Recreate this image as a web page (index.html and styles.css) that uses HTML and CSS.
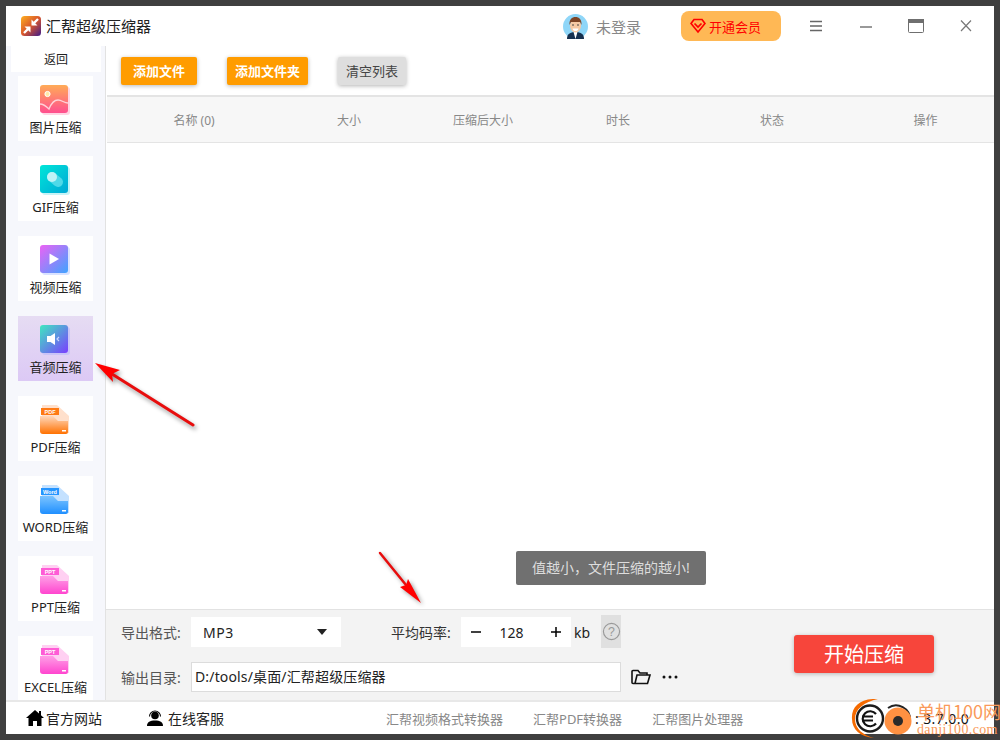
FILE: index.html
```html
<!DOCTYPE html>
<html lang="zh-CN">
<head>
<meta charset="utf-8">
<title>汇帮超级压缩器</title>
<link rel="stylesheet" href="styles.css">
</head>
<body>
<div class="app">
  <header class="titlebar">
    <div class="brand">
      <svg class="logo" viewBox="0 0 20 20">
        <defs><linearGradient id="lg" x1="0" y1="0" x2="1" y2="1"><stop offset="0" stop-color="#ffb01f"/><stop offset=".5" stop-color="#d8562c"/><stop offset="1" stop-color="#3c1a8c"/></linearGradient></defs>
        <rect width="20" height="20" rx="3.5" fill="url(#lg)"/>
        <path d="M17 3 11.500 8.500M3 17 8.500 11.500" stroke="#fff" stroke-width="2.400" fill="none"/>
        <path d="M10.500 3.500V9.500H16.500zM3.500 10.500H9.500V16.500z" fill="#fff"/>
      </svg>
      <span class="brand-name">汇帮超级压缩器</span>
    </div>
    <div class="user">
      <svg class="avatar" viewBox="0 0 25 25">
        <circle cx="12.500" cy="12.500" r="12.500" fill="#8fd6f8"/>
        <path d="M4 25c0-5 3-7 8.500-7S21 20 21 25z" fill="#16304f"/>
        <path d="M10.500 18h4l-2 7z" fill="#fff"/>
        <ellipse cx="12.500" cy="12" rx="5.500" ry="6.500" fill="#f6c9a4"/>
        <path d="M6.500 11C6 5.500 9 3 12.500 3S19 5.500 18.500 11L17 8H8z" fill="#7d4426"/>
        <path d="M9.500 14.500h6c-.5 2-1.500 2.500-3 2.500s-2.500-.5-3-2.500z" fill="#fff"/>
        <circle cx="10" cy="11" r=".8" fill="#333"/><circle cx="15" cy="11" r=".8" fill="#333"/>
      </svg>
      <span class="user-name">未登录</span>
    </div>
    <div class="vip">
      <svg class="vip-icon" viewBox="0 0 16 16"><path d="M4 1.500h8l3 4L8 14 1 5.500zM4.500 5.500 8 9l3.500-3.500" fill="none" stroke="#f00" stroke-width="1.700"/></svg>
      <span>开通会员</span>
    </div>
    <div class="win-controls">
      <svg class="ctl" viewBox="0 0 14 12"><path d="M1 1.500h12M1 6h12M1 10.500h12" stroke="#666" stroke-width="1.700"/></svg>
      <svg class="ctl" viewBox="0 0 14 12"><path d="M1 7h12" stroke="#777" stroke-width="1.500"/></svg>
      <svg class="ctl ctl-max" viewBox="0 0 16 14"><rect x=".5" y=".5" width="15" height="13" rx="1" fill="#fff" stroke="#6f6f6f"/><rect x="0" y="0" width="16" height="4" fill="#6f6f6f"/></svg>
      <svg class="ctl" viewBox="0 0 14 12"><path d="M2 .5l10 10.500M12 .5 2 11" stroke="#777" stroke-width="1.200"/></svg>
    </div>
  </header>

  <div class="body">
    <nav class="sidebar">
      <div class="back">返回</div>
      <div class="nav-list">
        <div class="nav-item">
          <svg class="nav-icon" viewBox="0 0 32 32">
            <defs><linearGradient id="g1" x1="0" y1="0" x2="0" y2="1"><stop offset="0" stop-color="#ffab57"/><stop offset="1" stop-color="#ff4f8f"/></linearGradient></defs>
            <rect x="2" y="2" width="28" height="28" rx="3" fill="#ffd5e3"/><rect width="28" height="28" rx="3" fill="url(#g1)"/>
            <circle cx="7.500" cy="9" r="2.600" fill="#ffe9a8" stroke="#fff" stroke-width="1"/>
            <path d="M0 19c4 0 6 2 9 5 2-5 5-9 9-9s6 3 10 3" fill="none" stroke="#ffd3d8" stroke-width="1.300"/>
          </svg>
          <span>图片压缩</span>
        </div>
        <div class="nav-item">
          <svg class="nav-icon" viewBox="0 0 32 32">
            <defs><linearGradient id="g2" x1="0" y1="0" x2="1" y2="1"><stop offset="0" stop-color="#00e6d8"/><stop offset="1" stop-color="#00a8d6"/></linearGradient></defs>
            <rect x="2" y="2" width="28" height="28" rx="3" fill="#c6f3f6"/><rect width="28" height="28" rx="3" fill="url(#g2)"/>
            <path d="M12 12 18 17" stroke="#4fd9e8" stroke-width="10" stroke-linecap="round"/>
            <circle cx="12" cy="12" r="5" fill="#bff3f6"/>
          </svg>
          <span>GIF压缩</span>
        </div>
        <div class="nav-item">
          <svg class="nav-icon" viewBox="0 0 32 32">
            <defs><linearGradient id="g3" x1="0" y1="0" x2="1" y2="1"><stop offset="0" stop-color="#ec62f5"/><stop offset="1" stop-color="#3fa4ff"/></linearGradient></defs>
            <rect x="2" y="2" width="28" height="28" rx="3" fill="#d9e2ff"/><rect width="28" height="28" rx="3" fill="url(#g3)"/>
            <path d="M9.500 8.500 19 14l-9.500 5.500z" fill="#fff"/>
          </svg>
          <span>视频压缩</span>
        </div>
        <div class="nav-item is-active">
          <svg class="nav-icon" viewBox="0 0 32 32">
            <defs><linearGradient id="g4" x1="0" y1="0" x2="1" y2="1"><stop offset="0" stop-color="#3fe8c0"/><stop offset="1" stop-color="#7a3dff"/></linearGradient></defs>
            <rect x="2" y="2" width="28" height="28" rx="3" fill="#c9c3f7"/><rect width="28" height="28" rx="3" fill="url(#g4)"/>
            <path d="M7 11h3.500L15 8v12l-4.500-3H7z" fill="#fff"/>
            <path d="M19 12l-2 2 2 2" fill="none" stroke="#c9d6ff" stroke-width="1.200"/>
          </svg>
          <span>音频压缩</span>
        </div>
        <div class="nav-item">
          <svg class="nav-icon" viewBox="0 0 32 32">
            <defs><linearGradient id="g5" x1="0" y1="0" x2="0" y2="1"><stop offset="0" stop-color="#ffd8bc"/><stop offset="1" stop-color="#ff7100"/></linearGradient></defs>
            <path d="M2 0h15l12 11v17H2z" fill="#ffe0cc"/>
            <path d="M0 11h13l5 5h10v11a2 2 0 0 1-2 2H3a3 3 0 0 1-3-3z" fill="url(#g5)"/>
            <rect x="1" y="3" width="18" height="7" fill="#ff7a14"/>
            <text class="mini" x="10" y="8.800">PDF</text>
            <rect x="22" y="25" width="4" height="1.500" fill="#fff"/>
          </svg>
          <span>PDF压缩</span>
        </div>
        <div class="nav-item">
          <svg class="nav-icon" viewBox="0 0 32 32">
            <defs><linearGradient id="g6" x1="0" y1="0" x2="0" y2="1"><stop offset="0" stop-color="#7cc4ff"/><stop offset="1" stop-color="#1f8fff"/></linearGradient></defs>
            <path d="M2 0h15l12 11v17H2z" fill="#c4e1ff"/>
            <path d="M0 11h13l5 5h10v11a2 2 0 0 1-2 2H3a3 3 0 0 1-3-3z" fill="url(#g6)"/>
            <rect x="1" y="3" width="18" height="7" fill="#2595ff"/>
            <text class="mini" x="10" y="8.800">Word</text>
            <rect x="22" y="25" width="4" height="1.500" fill="#fff"/>
          </svg>
          <span>WORD压缩</span>
        </div>
        <div class="nav-item">
          <svg class="nav-icon" viewBox="0 0 32 32">
            <defs><linearGradient id="g7" x1="0" y1="0" x2="0" y2="1"><stop offset="0" stop-color="#ff9fe6"/><stop offset="1" stop-color="#ff45cf"/></linearGradient></defs>
            <path d="M2 0h15l12 11v17H2z" fill="#ffd0f2"/>
            <path d="M0 11h13l5 5h10v11a2 2 0 0 1-2 2H3a3 3 0 0 1-3-3z" fill="url(#g7)"/>
            <rect x="1" y="3" width="18" height="7" fill="#ff5cd6"/>
            <text class="mini" x="10" y="8.800">PPT</text>
            <rect x="22" y="25" width="4" height="1.500" fill="#fff"/>
          </svg>
          <span>PPT压缩</span>
        </div>
        <div class="nav-item">
          <svg class="nav-icon" viewBox="0 0 32 32">
            <path d="M2 0h15l12 11v17H2z" fill="#ffd0f2"/>
            <path d="M0 11h13l5 5h10v11a2 2 0 0 1-2 2H3a3 3 0 0 1-3-3z" fill="url(#g7)"/>
            <rect x="1" y="3" width="18" height="7" fill="#ff5cd6"/>
            <text class="mini" x="10" y="8.800">PPT</text>
            <rect x="22" y="25" width="4" height="1.500" fill="#fff"/>
          </svg>
          <span>EXCEL压缩</span>
        </div>
      </div>
    </nav>

    <main class="main">
      <div class="toolbar">
        <button class="btn btn-orange btn-file">添加文件</button>
        <button class="btn btn-orange btn-folder">添加文件夹</button>
        <button class="btn btn-grey">清空列表</button>
      </div>
      <div class="thead">
        <span>名称 (0)</span><span>大小</span><span>压缩后大小</span><span>时长</span><span>状态</span><span>操作</span>
      </div>
      <div class="list"><div class="toast">值越小，文件压缩的越小!</div></div>
      <div class="panel">
        <div class="panel-fields">
          <div class="row">
            <label class="lbl">导出格式:</label>
            <div class="select"><span>MP3</span><i class="caret"></i></div>
            <label class="lbl lbl-rate">平均码率:</label>
            <div class="stepper">
              <svg viewBox="0 0 12 12" class="step-icon"><path d="M1 6h10" stroke="#000" stroke-width="1.500"/></svg>
              <span class="step-value">128</span>
              <svg viewBox="0 0 12 12" class="step-icon"><path d="M1 6h10M6 1v10" stroke="#000" stroke-width="1.500"/></svg>
            </div>
            <span class="unit">kb</span>
            <div class="help"><svg viewBox="0 0 20 20" class="help-icon"><circle cx="10" cy="10" r="8.500" fill="none" stroke="#999" stroke-width="1.200"/><text x="10" y="14.500" class="q">?</text></svg></div>
          </div>
          <div class="row">
            <label class="lbl">输出目录:</label>
            <div class="path">D:/tools/桌面/汇帮超级压缩器</div>
            <svg class="folder" viewBox="0 0 20 16"><path d="M4 14.500 6 6h13l-2.500 8.500H2A1 1 0 0 1 1 13.500V2.500A1 1 0 0 1 2 1.500h5l2 2.500h7v2" fill="none" stroke="#111" stroke-width="1.600"/></svg>
            <svg class="dots" viewBox="0 0 16 4"><circle cx="2" cy="2" r="1.500"/><circle cx="8" cy="2" r="1.500"/><circle cx="14" cy="2" r="1.500"/></svg>
          </div>
        </div>
        <button class="btn-start">开始压缩</button>
      </div>
    </main>
  </div>

  <footer class="statusbar">
    <a class="link link-home">
      <svg class="foot-icon" viewBox="0 0 18 16"><path d="M9 0 0 8h2.500v8H7v-5h4v5h4.500V8H18l-3-2.700V1h-2v2.500z" fill="#000"/></svg>
      官方网站
    </a>
    <a class="link link-service">
      <svg class="foot-icon2" viewBox="0 0 16 16"><circle cx="8" cy="5.500" r="3.800"/><path d="M2.500 6.500a5.500 5.500 0 0 1 11 0" fill="none" stroke="#000" stroke-width="1.100"/><path d="M0 16c0-4 3-5.500 8-5.500s8 1.500 8 5.500z"/></svg>
      在线客服
    </a>
    <span class="tool tool-first">汇帮视频格式转换器</span>
    <span class="tool">汇帮PDF转换器</span>
    <span class="tool">汇帮图片处理器</span>
    <span class="version">: 3.7.0.0</span>
  </footer>
</div>

<svg class="arrow arrow-a" viewBox="0 0 110 70">
  <path d="M100 64 19 13" stroke="#e80d0d" stroke-width="3" stroke-linecap="round"/>
  <path d="M2 2 27 9 19 13 20 21z" fill="#f00"/>
</svg>
<svg class="arrow arrow-b" viewBox="0 0 50 56">
  <path d="M1 1 27 33" stroke="#e80d0d" stroke-width="2.500" stroke-linecap="round"/>
  <path d="M42 51 21 35 27 33 29 27z" fill="#f00"/>
</svg>

<div class="watermark">
  <svg class="wm-logo" viewBox="0 0 66 40">
    <path d="M28 0C10-1 1 8 2 20c0 10 8 18 22 19C13 36 5 30 5 20 5 10 14 3 28 0z" fill="#f56a00"/>
    <circle cx="20" cy="19.500" r="13" fill="#fff" stroke="#1c1c1c" stroke-width="2.400"/>
    <path d="M26 15a7.500 7.500 0 1 0 0 9.500M12 17.500h11M12 21.500h11" fill="none" stroke="#111" stroke-width="2.200"/>
    <path d="M38 9A14 14 0 0 1 60 21" fill="none" stroke="#222" stroke-width="2"/>
    <circle cx="48" cy="22" r="13.500" fill="#ff9142"/>
    <circle cx="48" cy="22" r="5" fill="#2a2a2a"/>
  </svg>
  <div class="wm-text">
    <span class="wm-cn">单机100网</span>
    <span class="wm-en">danji100.com</span>
  </div>
</div>
</body>
</html>
```
FILE: styles.css
```css
* { box-sizing: border-box; }
html, body { margin: 0; padding: 0; height: 740px; overflow: hidden; }
body {
  background: #3f3f3f;
  padding: 6px;
  font-family: "Noto Sans", "Noto Sans CJK SC", sans-serif;
  color: #222;
  position: relative;
}
.app { width: 988px; height: 728px; background: #fff; display: flex; flex-direction: column; }

.titlebar { height: 40px; flex: none; display: flex; align-items: center; background: #fff; }
.brand { display: flex; align-items: center; margin-left: 15px; width: 542px; }
.logo { width: 20px; height: 20px; margin-right: 5px; }
.brand-name { font-size: 15px; line-height: 20px; color: #222; }
.user { display: flex; align-items: center; width: 118px; }
.avatar { width: 25px; height: 25px; margin-right: 8px; }
.user-name { font-size: 15px; color: #888; }
.vip {
  width: 100px; height: 30px; background: #ffb855; border-radius: 8px;
  display: flex; align-items: center; padding-left: 9px; color: #f00; font-size: 13px;
}
.vip-icon { width: 16px; height: 16px; margin-right: 3px; }
.win-controls { display: flex; align-items: center; margin-left: 28px; }
.ctl { width: 14px; height: 12px; margin-right: 36px; }
.ctl-max { width: 16px; height: 14px; margin-right: 35px; }
.ctl:last-child { margin-right: 0; }
.ctl:nth-child(2) { margin-left: 0; margin-right: 35px; }

.body { flex: 1; display: flex; min-height: 0; }
.sidebar {
  width: 100px; flex: none; background: #f6f7fc; border-right: 1px solid #e2e2e2;
  overflow: hidden; display: flex; flex-direction: column;
}
.back {
  width: 90px; height: 26px; margin-left: 5px; background: #fff;
  font-size: 12px; line-height: 28px; text-align: center; color: #222; flex: none;
}
.nav-list { display: flex; flex-direction: column; gap: 15px; margin: 4px 0 0 12px; }
.nav-item {
  width: 75px; height: 65px; flex: none; background: #fff;
  display: flex; flex-direction: column; align-items: center; padding-top: 9px;
  font-size: 13px; line-height: 20px; color: #222;
}
.nav-item span { white-space: nowrap; }
.nav-item.is-active { background: linear-gradient(#e6dcf3, #dcc9f5); }
.nav-icon { width: 32px; height: 32px; flex: none; margin-left: 1px; }
.mini { font: 700 5.500px "Liberation Sans", sans-serif; fill: #fff; text-anchor: middle; }

.main { flex: 1; min-width: 0; display: flex; flex-direction: column; }
.toolbar { height: 49px; flex: none; padding: 11px 0 0 15px; display: flex; align-items: flex-start; }
.btn {
  height: 28px; border: 0; padding: 0; border-radius: 2px; font: 700 13px/28px "Noto Sans CJK SC", sans-serif;
  color: #fff; text-align: center;
}
.btn-orange { background: #ff9c00; box-shadow: 0 1px 4px rgba(0,0,0,.28); }
.btn-file { width: 76px; margin-right: 30px; }
.btn-folder { width: 81px; margin-right: 30px; }
.btn-grey { width: 68px; background: #dedede; color: #444; font-weight: 400; box-shadow: 0 1px 4px rgba(0,0,0,.3); }

.thead {
  height: 48px; flex: none; background: #f7f7f7; margin-left: 1px;
  border-top: 2px solid #e4e4e4; border-bottom: 1px solid #e4e4e4;
  display: grid; grid-template-columns: 174px 136px 132px 138px 170px 137px;
  align-items: center; justify-items: center; font-size: 12px; color: #888;
}
.list { flex: 1; min-height: 0; background: #fff; display: flex; justify-content: flex-end; align-items: flex-end; padding: 0 288px 24px 0; }
.toast {
  width: 190px; height: 34px; background: #707070; border-radius: 2px; color: #ddd;
  font-size: 14px; line-height: 34px; text-align: center;
}
.panel {
  height: 91px; flex: none; background: #f3f3f3; border-top: 1px solid #e2e2e2;
  display: flex; position: relative;
}
.panel-fields { display: flex; flex-direction: column; gap: 15px; padding: 7px 0 0 15px; }
.row { display: flex; align-items: center; height: 30px; }
.lbl { width: 70px; font-size: 14px; color: #555; flex: none; white-space: nowrap; }
.select {
  width: 150px; height: 30px; background: #fff; display: flex; align-items: center; justify-content: space-between;
  padding: 0 14px 0 12px; font-size: 14px; letter-spacing: .5px; color: #222;
}
.caret { width: 0; height: 0; border: 5px solid transparent; border-top: 6px solid #222; border-bottom: 0; }
.lbl-rate { margin-left: 50px; color: #333; }
.stepper {
  width: 110px; height: 30px; background: #fff; display: flex; align-items: center; justify-content: space-between;
  padding: 0 9px 0 9px; font-size: 14px; color: #222;
}
.step-value { padding-right: 9px; }
.step-icon { width: 12px; height: 12px; }
.unit { margin-left: 3px; width: 27px; font-size: 14px; color: #222; }
.help { width: 20px; height: 33px; background: #e0e0e0; display: flex; align-items: center; justify-content: center; margin-top: -1px; }
.help-icon { width: 19px; height: 19px; }
.q { font: 13px "Liberation Sans", sans-serif; fill: #999; text-anchor: middle; }
.path {
  width: 430px; height: 30px; background: #fff; border: 1px solid #dcdcdc; padding-left: 3px;
  font-size: 14px; letter-spacing: .15px; line-height: 28px; color: #222;
}
.folder { width: 20px; height: 16px; margin-left: 10px; }
.dots { width: 16px; height: 4px; margin-left: 11px; fill: #111; }
.btn-start {
  position: absolute; left: 688px; top: 25px; width: 140px; height: 38px; border: 0; border-radius: 3px;
  background: #f7453b; color: #fff; font: 400 20px/38px "Noto Sans CJK SC", sans-serif;
  box-shadow: 0 1px 4px rgba(0,0,0,.25); padding: 0;
}

.statusbar {
  height: 34px; flex: none; background: #fff; border-top: 2px solid #e8e8e8; display: flex; align-items: center;
  position: relative; font-size: 14px;
}
.link { display: flex; align-items: center; color: #222; }
.link-home { margin-left: 20px; width: 121px; }
.link-service { width: 239px; }
.foot-icon { width: 18px; height: 16px; margin-right: 2px; }
.foot-icon2 { width: 16px; height: 16px; margin-right: 5px; }
.tool { font-size: 13px; color: #888; margin-right: 30px; white-space: nowrap; }
.version { position: absolute; left: 909px; top: 7px; font-size: 14px; letter-spacing: .4px; color: #111; }

.arrow { position: absolute; overflow: visible; }
.arrow-a { left: 93px; top: 361px; width: 110px; height: 70px; filter: drop-shadow(2px 3px 2px rgba(0,0,0,.4)); }
.arrow-b { left: 379px; top: 552px; width: 50px; height: 56px; filter: drop-shadow(2px 2px 2px rgba(0,0,0,.4)); }

.watermark { position: absolute; left: 850px; top: 699px; display: flex; }
.wm-logo { width: 66px; height: 40px; }
.wm-text { display: flex; flex-direction: column; margin-left: 1px; padding-top: 2px; color: #fa9a5a; white-space: nowrap; }
.wm-cn { font: 400 18px/21px "Noto Sans CJK SC", sans-serif; }
.wm-en { font: 400 14px/15px "Liberation Serif", serif; letter-spacing: .35px; }
```
